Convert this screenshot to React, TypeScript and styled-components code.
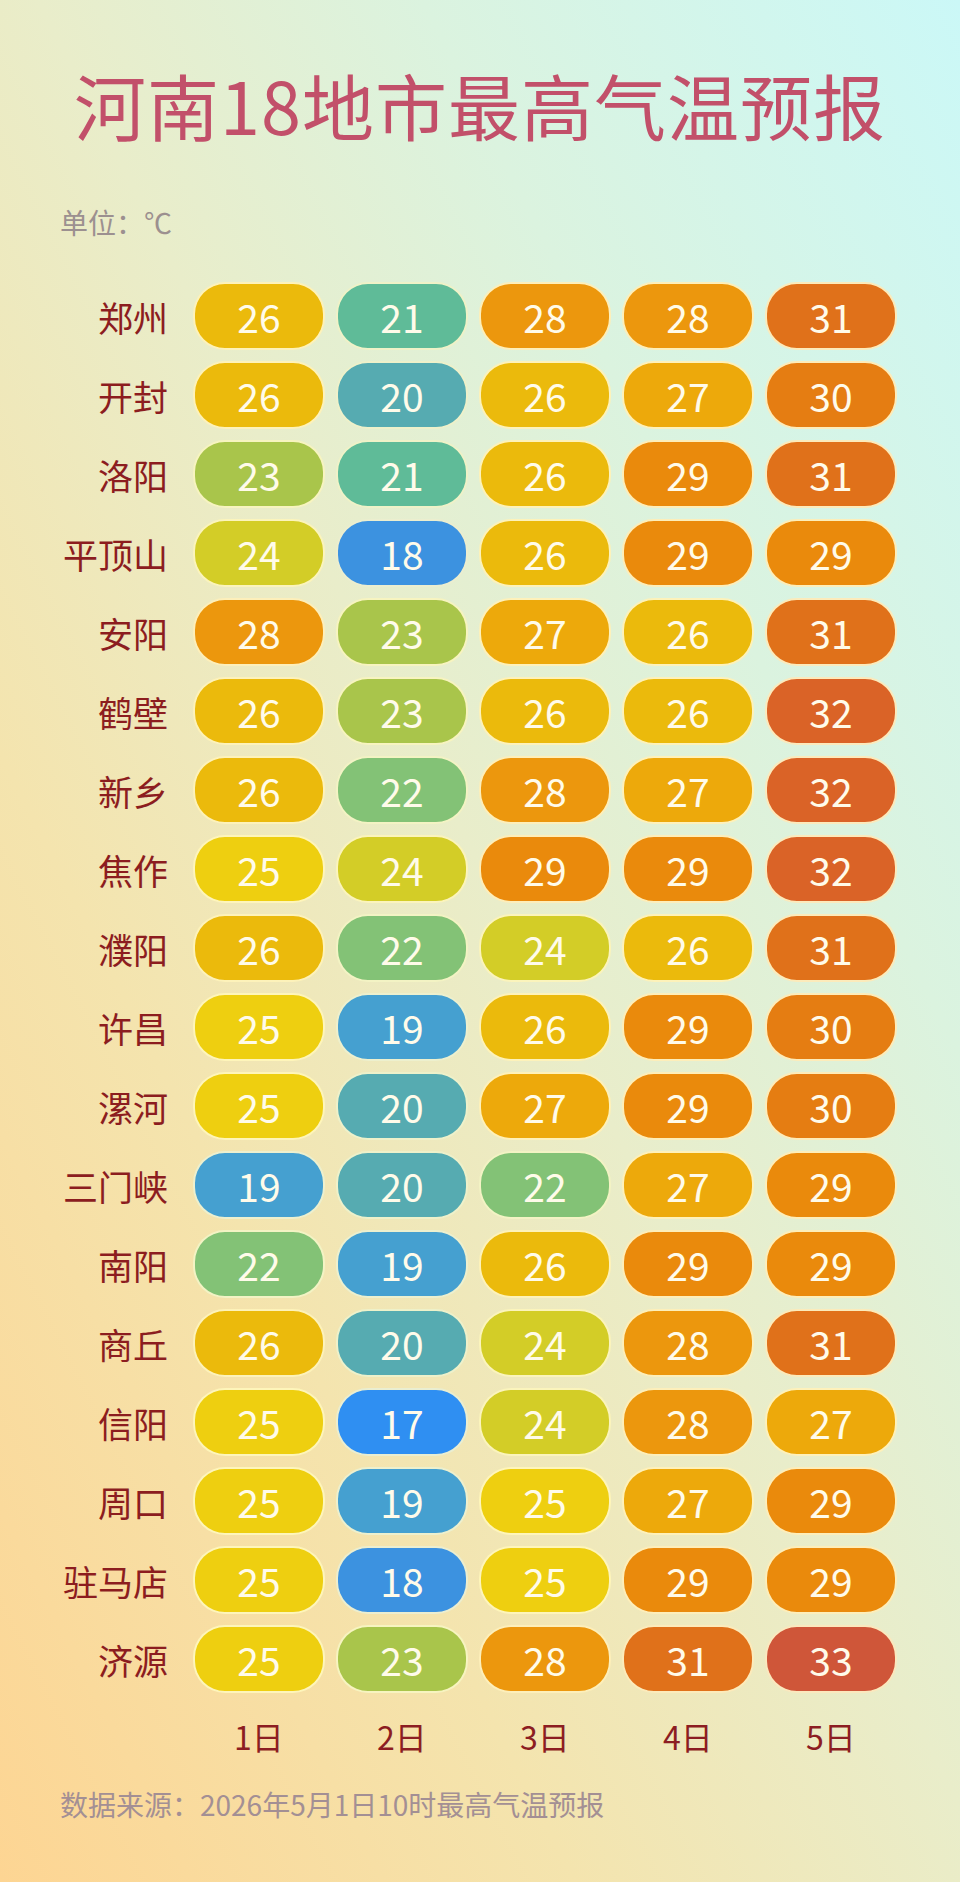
import { Fragment } from 'react'
import styled, { createGlobalStyle } from 'styled-components'

const GlobalStyle = createGlobalStyle`
  html, body {
    margin: 0;
    padding: 0;
  }
  body {
    font-family: "Noto Sans CJK SC", "Noto Sans", sans-serif;
  }
`

const cities: [string, number[]][] = [
  ['郑州', [26, 21, 28, 28, 31]],
  ['开封', [26, 20, 26, 27, 30]],
  ['洛阳', [23, 21, 26, 29, 31]],
  ['平顶山', [24, 18, 26, 29, 29]],
  ['安阳', [28, 23, 27, 26, 31]],
  ['鹤壁', [26, 23, 26, 26, 32]],
  ['新乡', [26, 22, 28, 27, 32]],
  ['焦作', [25, 24, 29, 29, 32]],
  ['濮阳', [26, 22, 24, 26, 31]],
  ['许昌', [25, 19, 26, 29, 30]],
  ['漯河', [25, 20, 27, 29, 30]],
  ['三门峡', [19, 20, 22, 27, 29]],
  ['南阳', [22, 19, 26, 29, 29]],
  ['商丘', [26, 20, 24, 28, 31]],
  ['信阳', [25, 17, 24, 28, 27]],
  ['周口', [25, 19, 25, 27, 29]],
  ['驻马店', [25, 18, 25, 29, 29]],
  ['济源', [25, 23, 28, 31, 33]],
]

const days = ['1日', '2日', '3日', '4日', '5日']

// colour scale by temperature
const tempColors: Record<number, string> = {
  17: '#2f8ff2',
  18: '#3c92e0',
  19: '#45a0d0',
  20: '#56abb1',
  21: '#5fbb98',
  22: '#83c276',
  23: '#a9c54b',
  24: '#d3cd27',
  25: '#eecf10',
  26: '#ebba0c',
  27: '#eda90b',
  28: '#ec970d',
  29: '#ea8a0c',
  30: '#e57d12',
  31: '#e0711a',
  32: '#da6327',
  33: '#cf5639',
}

const Page = styled.div`
  width: 960px;
  min-height: 1882px;
  box-sizing: border-box;
  padding: 64px 60px 0;
  background: linear-gradient(to top right, #fdd593 0%, #f4e4ae 30%, #e9edca 52%, #dbf3df 72%, #cbf8f7 100%);
  display: flex;
  flex-direction: column;
`

const Title = styled.h1`
  margin: 0;
  font-size: 72px;
  line-height: 80px;
  font-weight: 400;
  color: #c2506a;
  text-align: center;
  letter-spacing: 1px;
`

const Unit = styled.div`
  margin-top: 60px;
  font-size: 28px;
  line-height: 36px;
  color: #9c9090;
`

const Table = styled.div`
  margin-top: 42px;
  display: grid;
  grid-template-columns: 122px repeat(5, 132px);
  grid-auto-rows: 68px;
  column-gap: 11px;
  row-gap: 11px;
`

const CityName = styled.div`
  display: flex;
  align-items: center;
  justify-content: flex-end;
  padding-right: 14px;
  font-size: 35px;
  color: #8c1d1f;
`

const Pill = styled.div<{ $bg: string }>`
  display: flex;
  align-items: center;
  justify-content: center;
  box-sizing: border-box;
  border-radius: 32px;
  border: 2px solid rgba(255, 248, 205, 0.9);
  background: ${({ $bg }) => $bg};
  color: #fffbea;
  font-size: 39px;
  font-weight: 400;
`

const DayRow = styled.div`
  margin-top: 23px;
  display: grid;
  grid-template-columns: 122px repeat(5, 132px);
  column-gap: 11px;
`

const DayLabel = styled.div`
  text-align: center;
  font-size: 32px;
  line-height: 40px;
  color: #8c1d22;
`

const Footer = styled.div`
  margin-top: 30px;
  font-size: 28px;
  line-height: 36px;
  color: #a38f94;
`

export default function App() {
  return (
    <>
      <GlobalStyle />
      <Page>
        <Title>河南18地市最高气温预报</Title>
        <Unit>单位：℃</Unit>
        <Table>
          {cities.map(([name, temps]) => (
            <Fragment key={name}>
              <CityName>{name}</CityName>
              {temps.map((t, i) => (
                <Pill key={i} $bg={tempColors[t]}>
                  {t}
                </Pill>
              ))}
            </Fragment>
          ))}
        </Table>
        <DayRow>
          <span />
          {days.map((d) => (
            <DayLabel key={d}>{d}</DayLabel>
          ))}
        </DayRow>
        <Footer>数据来源：2026年5月1日10时最高气温预报</Footer>
      </Page>
    </>
  )
}
